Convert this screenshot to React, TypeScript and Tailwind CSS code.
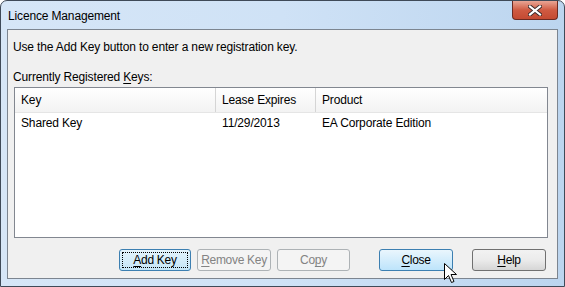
const columns = [
  { label: "Key", width: "w-[201px]" },
  { label: "Lease Expires", width: "w-[100px]" },
  { label: "Product", width: "flex-1" },
]

const rows = [["Shared Key", "11/29/2013", "EA Corporate Edition"]]

function Underlined({ text, at }: { text: string; at: number }) {
  return (
    <>
      {text.slice(0, at)}
      <span className="underline underline-offset-2">{text[at]}</span>
      {text.slice(at + 1)}
    </>
  )
}

function CloseGlyph() {
  return (
    <svg width="14" height="11" viewBox="0 0 14 11">
      <path d="M2 1.5 L12 9.5 M12 1.5 L2 9.5" stroke="#3a2a2a" strokeWidth="4" strokeLinecap="square" />
      <path d="M2 1.5 L12 9.5 M12 1.5 L2 9.5" stroke="#ffffff" strokeWidth="2.2" strokeLinecap="square" />
    </svg>
  )
}

function Cursor() {
  return (
    <svg width="14" height="22" viewBox="0 0 14 22" className="absolute left-[443px] top-[262px]">
      <path
        d="M0.5 0.5 L0.5 16.5 L4.5 12.5 L7.5 19.5 L10 18.5 L7 11.5 L12.5 11.5 Z"
        fill="#ffffff"
        stroke="#000000"
        strokeWidth="1"
        strokeLinejoin="round"
      />
    </svg>
  )
}

export default function App() {
  return (
    <div
      className="relative w-[565px] h-[287px] flex flex-col overflow-hidden rounded-t-[7px] border border-[#3f4a58] bg-gradient-to-r from-[#d6e6f7] via-[#cfe2f6] to-[#bcd5ef] text-[12px] tracking-[-0.15px] text-black"
      style={{ fontFamily: '"Liberation Sans", Arial, sans-serif' }}
    >
      <div className="h-[28px] flex items-start justify-between">
        <div className="pl-[7px] pt-[8px] leading-[15px] text-[12px] text-black">Licence Management</div>
        <div className="mr-[6px] w-[46px] h-[19px] flex items-center justify-center rounded-b-[4px] border border-t-0 border-[#6b2a22] bg-gradient-to-b from-[#e8a595] via-[#cf5a42] to-[#c44a32]">
          <CloseGlyph />
        </div>
      </div>

      <div className="flex-1 flex px-[6px]">
        <div className="flex-1 flex flex-col border border-[#7c8590] bg-[#f0f0f0] pl-[5px] pr-[9px]">
          <div className="mt-[10px] leading-[15px]">Use the Add Key button to enter a new registration key.</div>
          <div className="mt-[15px] leading-[15px]">
            Currently Registered <Underlined text="Keys:" at={0} />
          </div>

          <div className="ml-[1px] mt-[2px] h-[151px] flex flex-col border border-[#828790] bg-white">
            <div className="h-[25px] flex border-b border-[#e5e5e5] bg-gradient-to-b from-[#ffffff] to-[#f3f3f3]">
              {columns.map((c) => (
                <div
                  key={c.label}
                  className={`${c.width} flex items-center pl-[6px] border-r border-[#d5d5d5] last:border-r-0`}
                >
                  {c.label}
                </div>
              ))}
            </div>
            {rows.map((r) => (
              <div key={r[0]} className="h-[19px] flex">
                {r.map((cell, i) => (
                  <div key={i} className={`${columns[i].width} flex items-center pl-[6px]`}>
                    {cell}
                  </div>
                ))}
              </div>
            ))}
          </div>

          <div className="mt-[11px] flex items-start tracking-[-0.3px]">
            <button className="ml-[106px] w-[72px] h-[22px] p-[2px] rounded-[3px] border border-[#3c7fb1] bg-gradient-to-b from-[#e5f4fc] to-[#c4e5f6]">
              <span className="h-full flex items-center justify-center border border-dotted border-black">
                <Underlined text="Add Key" at={0} />
              </span>
            </button>
            <button className="ml-[6px] w-[74px] h-[22px] rounded-[3px] border border-[#adb2b5] bg-[#f4f4f4] text-[#838383]">
              <Underlined text="Remove Key" at={0} />
            </button>
            <button className="ml-[6px] w-[73px] h-[22px] rounded-[3px] border border-[#adb2b5] bg-[#f4f4f4] text-[#838383]">
              <Underlined text="Copy" at={2} />
            </button>
            <button className="ml-[29px] w-[74px] h-[22px] rounded-[3px] border border-[#3c7fb1] bg-gradient-to-b from-[#eaf6fd] to-[#bde4fb]">
              <Underlined text="Close" at={0} />
            </button>
            <button className="ml-[19px] w-[74px] h-[22px] rounded-[3px] border border-[#707070] bg-gradient-to-b from-[#f2f2f2] via-[#ebebeb] to-[#d6d6d6]">
              <Underlined text="Help" at={0} />
            </button>
          </div>
        </div>
      </div>

      <div className="h-[7px]" />
      <Cursor />
    </div>
  )
}
